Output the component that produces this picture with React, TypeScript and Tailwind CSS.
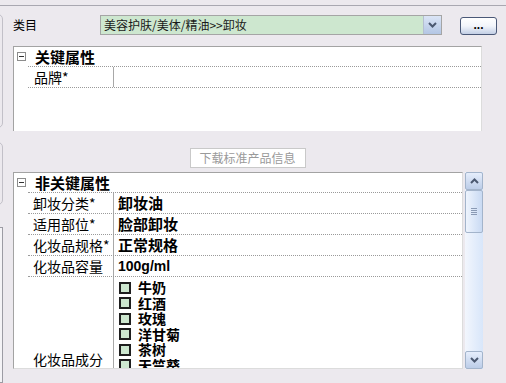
import React from 'react';

const font = "font-['Noto_Sans_CJK_SC','Noto_Sans',sans-serif]";

const ingredients = ['牛奶', '红酒', '玫瑰', '洋甘菊', '茶树', '天竺葵'];

const rows = [
  { label: '卸妆分类*', value: '卸妆油' },
  { label: '适用部位*', value: '脸部卸妆' },
  { label: '化妆品规格*', value: '正常规格' },
];

function Minus() {
  return (
    <div className="w-[9px] h-[9px] border border-[#8c8c8c] bg-white flex items-center justify-center shrink-0">
      <div className="w-[5px] h-px bg-[#333]" />
    </div>
  );
}

function Chevron({ up }: { up?: boolean }) {
  return (
    <svg width="9" height="6" viewBox="0 0 9 6">
      <path d={up ? 'M1 5 L4.5 1.5 L8 5' : 'M1 1 L4.5 4.5 L8 1'} fill="none" stroke="#4b5870" strokeWidth="2" />
    </svg>
  );
}

function ScrollBtn({ up }: { up?: boolean }) {
  return (
    <div className="h-[18px] w-[18px] shrink-0 rounded-[2px] border border-[#a3b4cb] bg-gradient-to-b from-[#e6eefc] to-[#bccde8] flex items-center justify-center">
      <Chevron up={up} />
    </div>
  );
}

export default function App() {
  return (
    <div className={`w-[506px] h-[383px] bg-[#ECE9EE] overflow-hidden flex flex-col text-black ${font}`}>
      <div className="h-[5px] shrink-0" />
      <div className="h-px bg-[#a9a8b1] shrink-0" />

      <div className="flex flex-1 min-h-0">
        {/* left edge of neighbouring panel */}
        <div className="w-[4px] shrink-0 overflow-hidden flex flex-col">
          <div className="h-[8px] shrink-0" />
          <div className="h-[114px] -ml-[8px] w-[11px] border border-[#c2c0c8] rounded-r-[5px] shrink-0" />
          <div className="h-[14px] shrink-0" />
          <div className="h-[63px] -ml-[8px] w-[11px] border border-[#c2c0c8] rounded-r-[5px] shrink-0" />
          <div className="h-[22px] shrink-0" />
          <div className="flex-1 -ml-[8px] w-[11px] border border-[#9c9ca4] bg-[#f4f3f6]" />
        </div>

        <div className="flex-1 pl-[9px] flex flex-col">
          {/* category */}
          <div className="mt-[9px] h-[20px] flex items-center">
            <span className="w-[87px] text-[12px] leading-none">类目</span>
            <div className="w-[342px] h-[20px] border border-[#a5a5a5] bg-[#cde7cf] flex items-center">
              <span className="flex-1 pl-[3px] text-[12px] leading-none text-[#1a1a1a]">美容护肤/美体/精油&gt;&gt;卸妆</span>
              <div className="w-[18px] h-[18px] border-l border-[#b5bfd0] bg-gradient-to-b from-[#dbe5f6] to-[#b3c6e4] flex items-center justify-center">
                <Chevron />
              </div>
            </div>
            <div className="ml-[18px] mt-[2px] w-[37px] h-[18px] rounded-[3px] border border-[#4a5877] bg-gradient-to-b from-white via-[#f2f5fb] to-[#c3cfe5] flex items-center justify-center text-[12px] font-bold leading-none pb-[3px] font-['Liberation_Sans',sans-serif]">
              ...
            </div>
          </div>

          {/* key attributes */}
          <div className="mt-[11px] w-[469px] h-[85px] border border-[#a3a3a3] border-r-[#dcdcdc] border-b-0 bg-white flex flex-col">
            <div className="h-[19px] flex items-center pl-[3px] gap-[9px]">
              <Minus />
              <span className="text-[15px] font-bold leading-none">关键属性</span>
            </div>
            <div className="ml-[14px] h-[22px] flex border-y border-dotted border-[#9a9a9a]">
              <div className="w-[86px] border-r border-[#a8a8a8] pl-[6px] text-[14px] leading-[20px]">品牌*</div>
              <div className="flex-1" />
            </div>
          </div>

          {/* download button */}
          <div className="mt-[17px] w-[469px] flex justify-center">
            <div className="w-[116px] h-[20px] border border-[#c9c9c9] bg-white flex items-center justify-center text-[12px] text-[#9a9a9a] leading-none">
              下载标准产品信息
            </div>
          </div>

          {/* non key attributes */}
          <div className="mt-[4px] w-[470px] h-[197px] flex gap-[2px]">
            <div className="w-[450px] border border-[#a3a3a3] border-r-[#dcdcdc] border-b-[#dcdcdc] bg-white overflow-hidden flex flex-col">
              <div className="h-[19px] shrink-0 flex items-center pl-[3px] gap-[9px]">
                <Minus />
                <span className="text-[15px] font-bold leading-none">非关键属性</span>
              </div>
              <div className="ml-[14px] flex flex-col border-t border-dotted border-[#9a9a9a]">
                {rows.map(r => (
                  <div key={r.label} className="h-[21px] shrink-0 flex border-b border-dotted border-[#9a9a9a]">
                    <div className="w-[86px] border-r border-[#a8a8a8] pl-[5px] text-[14px] leading-[20px] whitespace-nowrap overflow-hidden">{r.label}</div>
                    <div className="flex-1 pl-[4px] text-[15px] font-bold leading-[20px]">{r.value}</div>
                  </div>
                ))}
                <div className="h-[21px] shrink-0 flex border-b border-dotted border-[#9a9a9a]">
                  <div className="w-[86px] border-r border-[#a8a8a8] pl-[5px] text-[14px] leading-[20px] whitespace-nowrap overflow-hidden">化妆品容量</div>
                  <div className="flex-1 pl-[4px] text-[14px] font-bold leading-[20px] font-['Liberation_Sans',sans-serif]">100g/ml</div>
                </div>
                <div className="flex shrink-0">
                  <div className="w-[86px] border-r border-[#a8a8a8] pl-[5px] pb-[4px] text-[14px] leading-[20px] whitespace-nowrap overflow-hidden flex items-end">化妆品成分</div>
                  <div className="flex-1 pl-[5px] pt-[3px] flex flex-col">
                    {ingredients.map(i => (
                      <div key={i} className="h-[15.5px] flex items-center gap-[7px]">
                        <div className="w-[12px] h-[12px] border-2 border-[#1e1e1e] bg-[#cde7cf] shrink-0" />
                        <span className="text-[14px] font-bold leading-[15px]">{i}</span>
                      </div>
                    ))}
                  </div>
                </div>
              </div>
            </div>

            {/* scrollbar */}
            <div className="w-[18px] flex flex-col bg-gradient-to-r from-[#f2f6fd] to-[#d8e6fa]">
              <ScrollBtn up />
              <div className="h-[43px] rounded-[2px] border border-[#a3b4cb] bg-gradient-to-r from-[#eef4fd] to-[#c9daf3] flex items-center justify-center">
                <div className="flex flex-col gap-[1px]">
                  <div className="w-[6px] h-px bg-[#8a9ab4]" />
                  <div className="w-[6px] h-px bg-[#8a9ab4]" />
                  <div className="w-[6px] h-px bg-[#8a9ab4]" />
                  <div className="w-[6px] h-px bg-[#8a9ab4]" />
                </div>
              </div>
              <div className="flex-1" />
              <ScrollBtn />
            </div>
          </div>
        </div>
      </div>
    </div>
  );
}
